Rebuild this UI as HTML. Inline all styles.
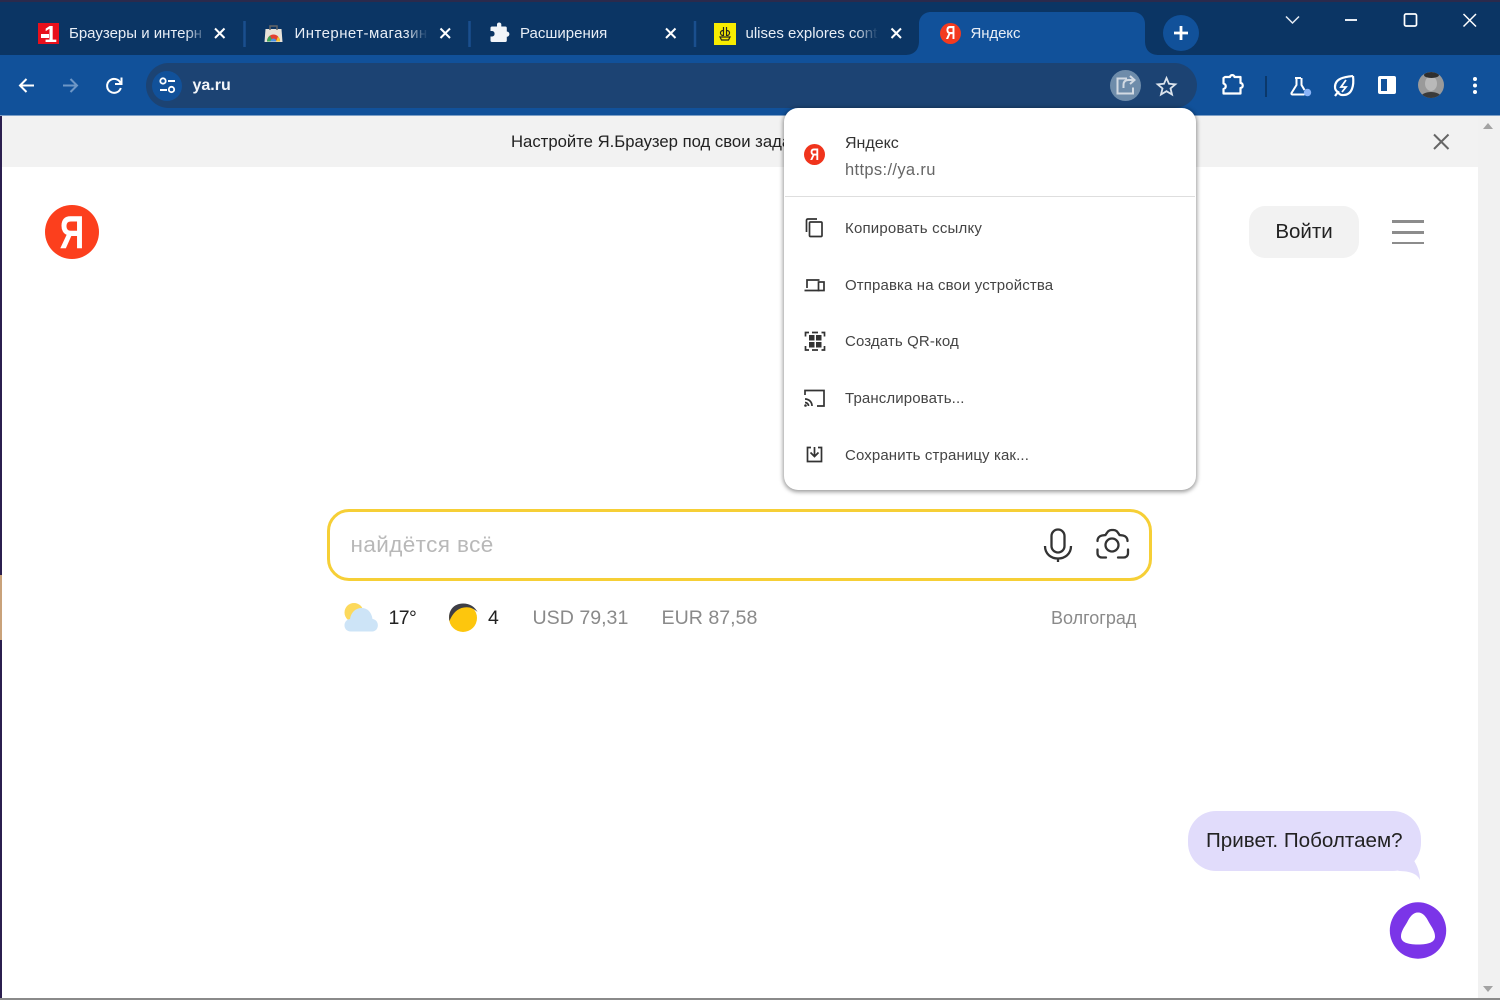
<!DOCTYPE html>
<html lang="ru"><head><meta charset="utf-8"><title>Яндекс</title>
<style>
html,body{margin:0;padding:0;width:1500px;height:1000px;overflow:hidden;background:#fff}
body{position:relative;font-family:"Liberation Sans","Noto Sans CJK SC",sans-serif}
.a{position:absolute}
.t{position:absolute;white-space:nowrap;line-height:20px}
svg{position:absolute;overflow:visible}
.tab{color:#e8eef6;font-size:15px;top:24px}
.fade{position:absolute;top:20px;height:26px;width:26px;background:linear-gradient(90deg,rgba(11,53,100,0),#0b3564 85%)}
.m{color:#444;font-size:15px;left:845px;letter-spacing:.12px}
.ws{fill:none;stroke:#fff;stroke-width:2}
.ic{fill:none;stroke:#333;stroke-width:1.7}
.ya{position:absolute;text-align:center;color:#fff;font-weight:bold;transform:scaleX(.74)}
</style></head><body>
<div class="a" style="left:0;top:0;width:1500px;height:1000px;background:#fff"></div>
<!-- tab strip -->
<div class="a" style="left:0;top:0;width:1500px;height:55px;background:#0b3564"></div>
<div class="a" style="left:0;top:0;width:1500px;height:2px;background:#2b2a4c"></div>
<div class="a" style="left:0;top:55px;width:1500px;height:61px;background:#11519a"></div>
<div class="a" style="left:0;top:115px;width:1500px;height:1px;background:#7d9fc6"></div>
<!-- tab 1 -->
<div class="a" style="left:38px;top:23px;width:21px;height:21px;background:#e8101c"></div>
<div class="t" style="left:40px;top:24px;width:21px;text-align:center;color:#fff;font-weight:bold;font-size:23px;line-height:20px">1</div>
<div class="a" style="left:41px;top:34px;width:8px;height:4px;background:#fff"></div>
<div class="t tab" style="left:69px">Браузеры и интерн</div>
<div class="fade" style="left:186px"></div>
<svg style="left:0;top:0" width="1" height="1"><path class="ws" d="M215 28.500l9.500 9.500M224.500 28.500l-9.500 9.500"/><path class="ws" d="M440.500 28.500l9.500 9.500M450 28.500l-9.500 9.500"/><path class="ws" d="M666 28.500l9.500 9.500M675.500 28.500l-9.500 9.500"/><path class="ws" d="M891.500 28.500l9.500 9.500M901 28.500l-9.500 9.500"/><path class="ws" d="M1117 28.500l9.500 9.500M1126.500 28.500l-9.500 9.500"/>
<path d="M244.500 21v26M469.500 21v26M695 21v26" stroke="#1a4f8e" stroke-width="2.500"/></svg>
<!-- tab 2 -->
<svg style="left:264px;top:24px" width="20" height="20"><path d="M1.500 5h16l1 13h-18z" fill="#e8e3da"/><path d="M6 6V2h7v4" fill="none" stroke="#666" stroke-width="1.500"/><path d="M3 17.500a6.500 7 0 0 1 13 0z" fill="#e34133"/><path d="M3 17.500a6.500 7 0 0 1 3-5.800l3 5.800z" fill="#3aa757"/><path d="M12.500 17.500a3 3 0 0 0-6 0z" fill="#4a90e2"/><path d="M16 17.500a6.500 7 0 0 0-2-5L12 17.500z" fill="#f7c52d"/></svg>
<div class="t tab" style="left:294.500px;letter-spacing:.45px">Интернет-магазин</div>
<div class="fade" style="left:406px"></div>
<!-- tab 3 -->
<svg style="left:489px;top:23px" width="20" height="20"><path d="M8 1.500a2.300 2.300 0 0 1 4.300 0V4h4a1.500 1.500 0 0 1 1.500 1.500v3.500a2.600 2.600 0 0 1 0 5.200V18a1.500 1.500 0 0 1-1.500 1.500H3A1.500 1.500 0 0 1 1.500 18v-4h1.800a2.800 2.800 0 0 0 0-5.500H1.500V5.500A1.500 1.500 0 0 1 3 4h5z" fill="#f2f5f9" transform="translate(0 -.5)"/></svg>
<div class="t tab" style="left:520px">Расширения</div>
<!-- tab 4 -->
<div class="a" style="left:714px;top:22.500px;width:22px;height:22px;background:#f8ec00"></div>
<svg style="left:714px;top:22px" width="22" height="22"><path d="M9.500 5v9M12.500 5v9M9 8.500a2.300 2.300 0 1 0 0 5M13 8.500a2.300 2.300 0 1 1 0 5M6 15h10l-1.500 3h-7z" stroke="#222" stroke-width="1.200" fill="none"/></svg>
<div class="t tab" style="left:745.500px">ulises explores cont</div>
<div class="fade" style="left:856px"></div>
<!-- active tab -->
<svg style="left:905px;top:10px" width="260" height="46"><path d="M0 45c8 0 14-4 14-14V14C14 7 19 2 26 2h202c7 0 12 5 12 12v17c0 10 6 14 14 14z" fill="#11519a"/></svg>
<div class="a" style="left:940px;top:23px;width:21px;height:21px;border-radius:50%;background:#f33a1f"></div>
<div class="ya" style="left:940px;top:23px;width:21px;font-size:18px;line-height:21px">Я</div>
<div class="t tab" style="left:970.500px;letter-spacing:-.1px">Яндекс</div>
<!-- new tab -->
<div class="a" style="left:1163px;top:15px;width:36px;height:36px;border-radius:50%;background:#11519a"></div>
<svg style="left:1163px;top:15px" width="36" height="36"><path d="M18 11v14M11 18h14" stroke="#fff" stroke-width="2.800"/></svg>
<!-- window controls -->
<svg style="left:0;top:0" width="1" height="1"><path d="M1286 16.500l6.500 6.500 6.500-6.500" fill="none" stroke="#e6ecf4" stroke-width="1.500"/><path d="M1345 20h12" stroke="#e6ecf4" stroke-width="2"/><rect x="1404.500" y="14" width="12" height="12" rx="1.500" fill="none" stroke="#fff" stroke-width="1.700"/><path d="M1463.500 14l12.500 12.500M1476 14l-12.500 12.500" stroke="#fff" stroke-width="1.500" fill="none"/></svg>
<!-- toolbar -->
<svg style="left:0;top:0" width="1" height="1"><path d="M34 85.500H20M26.500 79l-6.500 6.500 6.500 6.500" class="ws"/><path d="M63 85.500h14M70.500 79l6.500 6.500-6.500 6.500" fill="none" stroke="#6e97c6" stroke-width="2"/><path d="M120.500 83a7 7 0 1 0 .3 5" class="ws"/><path d="M121.500 77.500v6.500H115" fill="none" stroke="#fff" stroke-width="2"/></svg>
<div class="a" style="left:146px;top:63px;width:1051px;height:45px;border-radius:23px;background:#1c4373"></div>
<div class="a" style="left:152px;top:70.500px;width:30px;height:30px;border-radius:50%;background:#11519a"></div>
<svg style="left:0;top:0" width="1" height="1"><circle cx="163" cy="81" r="2.700" fill="none" stroke="#fff" stroke-width="1.800"/><path d="M168 81h7M160 90h7" stroke="#fff" stroke-width="2"/><circle cx="171.500" cy="89.500" r="2.700" fill="none" stroke="#fff" stroke-width="1.800"/></svg>
<div class="t" style="left:192.500px;top:76px;color:#f2f5f9;font-size:16px;font-weight:bold">ya.ru</div>
<div class="a" style="left:1110px;top:70px;width:31px;height:31px;border-radius:50%;background:#6e8caa"></div>
<svg style="left:0;top:0" width="1" height="1"><path d="M1127 78.500h-9.500v15h15.500v-6" fill="none" stroke="#d2dae3" stroke-width="2"/><path d="M1123.500 88v-3q0-5 5-5h6M1130 76l4.500 4-4.500 4" fill="none" stroke="#d2dae3" stroke-width="2"/>
<path d="M1166.500 78l2.500 5.800 6.300.5-4.800 4.100 1.500 6.100-5.500-3.300-5.500 3.300 1.500-6.100-4.800-4.100 6.300-.5z" fill="none" stroke="#dbe3ec" stroke-width="1.800"/>
<path d="M1225 77h5c0-2.500 4.500-2.500 4.500 0h6v6c3 0 3 5 0 5v5.500h-17V89c3-1 3-4.500 0-5.500V78z" fill="none" stroke="#fff" stroke-width="2.200" stroke-linejoin="round"/>
<path d="M1266 76v21" stroke="#0b3564" stroke-width="1.800"/>
<path d="M1295 78h6M1296.500 78v7l-5 8a1 1 0 0 0 1 1.500h12" fill="none" stroke="#fff" stroke-width="2"/><path d="M1301.500 78v7l3 5" fill="none" stroke="#fff" stroke-width="2"/><circle cx="1307.500" cy="92.500" r="3.700" fill="#8ab4f8"/>
<path d="M1353 76c-8 1-18 2-18 11 0 2 1 4 3 5l-3 4M1353 76c1 8 0 20-11 19-2 0-3-1-4-3" fill="none" stroke="#fff" stroke-width="2.200"/><path d="M1346 80l-5 7h5l-4 5" fill="none" stroke="#fff" stroke-width="1.800"/>
<rect x="1378" y="76" width="18" height="18" rx="2" fill="#fff"/><rect x="1381" y="79" width="6" height="12" fill="#11519a"/>
<circle cx="1475" cy="79" r="2" fill="#fff"/><circle cx="1475" cy="85.500" r="2" fill="#fff"/><circle cx="1475" cy="92" r="2" fill="#fff"/></svg>
<div class="a" style="left:1418px;top:72px;width:26px;height:26px;border-radius:50%;background:#9a9a9a;overflow:hidden"><div class="a" style="left:7px;top:4px;width:12px;height:15px;border-radius:50%;background:#b9b9b9"></div><div class="a" style="left:6px;top:0;width:15px;height:6px;border-radius:50%;background:#2f2f2f"></div><div class="a" style="left:3px;top:20px;width:20px;height:10px;border-radius:50%;background:#3a3a3a"></div></div>
<!-- page -->
<div class="a" style="left:0;top:116px;width:2px;height:884px;background:#2b1f4f"></div>
<div class="a" style="left:0;top:575px;width:2px;height:65px;background:#c9a27a"></div>
<div class="a" style="left:2px;top:116px;width:1476px;height:51px;background:#f2f2f2"></div>
<div class="a" style="left:1478px;top:116px;width:22px;height:884px;background:#f1f1f1"></div>
<div class="a" style="left:0;top:998px;width:1500px;height:2px;background:#8a8a8a"></div>
<svg style="left:0;top:0" width="1" height="1"><path d="M1488 123l5 6h-10z" fill="#a3a3a3"/><path d="M1488 992l5-6h-10z" fill="#a3a3a3"/><path d="M1434 134.500l14.500 14.500M1448.500 134.500L1434 149" stroke="#666" stroke-width="2" fill="none"/></svg>
<div class="t" style="left:511px;top:132px;color:#222;font-size:16.700px">Настройте Я.Браузер под свои задачи</div>
<!-- logo -->
<div class="a" style="left:44.500px;top:205px;width:54px;height:54px;border-radius:50%;background:#fc3f1d"></div>
<div class="ya" style="left:44.500px;top:205px;width:54px;font-size:46px;line-height:54px">Я</div>
<!-- login -->
<div class="a" style="left:1249px;top:206px;width:110px;height:52px;border-radius:16px;background:#f2f2f2"></div>
<div class="t" style="left:1249px;top:222px;width:110px;text-align:center;color:#222;font-size:20.500px">Войти</div>
<div class="a" style="left:1392px;top:220px;width:32px;height:2.500px;background:#8c8c8c"></div>
<div class="a" style="left:1392px;top:231px;width:32px;height:2.500px;background:#8c8c8c"></div>
<div class="a" style="left:1392px;top:241.500px;width:32px;height:2.500px;background:#8c8c8c"></div>
<!-- search -->
<div class="a" style="left:327px;top:509px;width:825px;height:72px;box-sizing:border-box;border:3px solid #f6cf36;border-radius:22px;background:#fff"></div>
<div class="t" style="left:350.500px;top:535px;color:#b8b8b8;font-size:22.500px;letter-spacing:.4px">найдётся всё</div>
<svg style="left:0;top:0" width="1" height="1"><rect x="1051.500" y="529.500" width="13" height="23" rx="6.500" fill="none" stroke="#333" stroke-width="2.300"/><path d="M1045 546c0 8 6 12.500 13 12.500s13-4.500 13-12.500M1058 558v4" fill="none" stroke="#333" stroke-width="2.300"/>
<circle cx="1112" cy="545" r="6.500" fill="none" stroke="#333" stroke-width="2.300"/><path d="M1097.500 541c0-3 2-5 4.500-5.500l3.500-.5c2-3 3-5 6-5h2c3 0 4 2 6 5l3.500.5c2.500.5 4.500 2.500 4.500 5.500M1097.500 549.500v3.500c0 3 2 4.500 4.500 4.500h4M1118 557.500h5.500c2.500 0 4.500-1.500 4.500-4.500v-3.500" fill="none" stroke="#333" stroke-width="2.300" stroke-linecap="round"/>
<circle cx="354" cy="612.500" r="9.500" fill="#fcd95c"/><path d="M351 631.500c-8.500 0-8.500-11.500-1-12.500 1-7 6-11 11.500-11 6 0 10 4 11 11 7.500 1 7 12.500-.5 12.500z" fill="#cde4f7"/>
<circle cx="463" cy="618" r="14" fill="#fdc60d"/><path d="M449.500 621c-2-10 4-17.500 13.500-17.500 7 0 12 3.500 14.500 8.500-4-4-9-5.500-13.500-4.500-7 1-11.500 6-14.500 13.500z" fill="#3e3e45"/></svg>
<div class="t" style="left:388.500px;top:608px;color:#222;font-size:19.500px;letter-spacing:-.6px">17°</div>
<div class="t" style="left:488px;top:608px;color:#222;font-size:19.500px">4</div>
<div class="t" style="left:532.500px;top:608px;color:#8a8a8a;font-size:19.600px">USD 79,31</div>
<div class="t" style="left:661.500px;top:608px;color:#8a8a8a;font-size:19.600px">EUR 87,58</div>
<div class="t" style="left:1051px;top:608px;color:#8a8a8a;font-size:18px">Волгоград</div>
<!-- alice -->
<div class="a" style="left:1187.500px;top:811px;width:233px;height:60px;border-radius:28px;background:#e1dcfb"></div>
<svg style="left:0;top:0" width="1" height="1"><path d="M1398 871c10 0 19 2 22 9 0-7-3-15-7-21z" fill="#e1dcfb"/><circle cx="1418" cy="930.500" r="28.200" fill="#7b35e8"/><path d="M1418 912.500c5 0 8 4 11 10 3 5 6 9 6 14 0 5.500-6 8-17 8s-17-2.500-17-8c0-5 3-9 6-14 3-6 6-10 11-10z" fill="#fff"/></svg>
<div class="t" style="left:1206px;top:831px;color:#222;font-size:20.600px">Привет. Поболтаем?</div>
<!-- popup -->
<div class="a" style="left:784px;top:108px;width:412px;height:382px;border-radius:14px;background:#fff;box-shadow:0 1px 4px 1px rgba(0,0,0,.4)"></div>
<div class="a" style="left:785px;top:196px;width:410px;height:1px;background:#dedede"></div>
<div class="a" style="left:804px;top:144px;width:21px;height:21px;border-radius:50%;background:#f0341c"></div>
<div class="ya" style="left:804px;top:144px;width:21px;font-size:17px;line-height:21px">Я</div>
<div class="t m" style="top:133.500px;font-size:16px;color:#333;letter-spacing:0">Яндекс</div>
<div class="t m" style="top:159.500px;font-size:16.500px;color:#666;letter-spacing:.35px">https://ya.ru</div>
<div class="t m" style="top:219px;letter-spacing:.2px">Копировать ссылку</div>
<div class="t m" style="top:276px">Отправка на свои устройства</div>
<div class="t m" style="top:332px">Создать QR-код</div>
<div class="t m" style="top:389px">Транслировать...</div>
<div class="t m" style="top:446px">Сохранить страницу как...</div>
<svg style="left:0;top:0" width="1" height="1">
<rect x="809.500" y="222" width="12.500" height="14.500" rx="1" class="ic"/><path d="M806.500 232v-11.500c0-1 .5-1.500 1.500-1.500h9" class="ic"/>
<path d="M804.500 290.500h15M807 288v-8h12.500" class="ic"/><rect x="818.500" y="282" width="5.500" height="8.500" class="ic" fill="#fff"/>
<rect x="809" y="335" width="5.500" height="5.500" fill="#333"/><rect x="816" y="335" width="5.500" height="5.500" fill="#333"/><rect x="809" y="342" width="5.500" height="5.500" fill="#333"/><rect x="816" y="342" width="5.500" height="5.500" fill="#333"/><path d="M809 332.500h-3.500v4M821.500 332.500h3v4M805.500 346v4h3.500M824.500 346v4h-3M812 332.500h6M812 350h6" class="ic" stroke-width="1.300"/>
<path d="M805 395v-4.500h19V406h-7" class="ic"/><path d="M805 399c4 0 7 3 7 7M805 402.500c2 0 3.500 1.500 3.500 3.500" class="ic"/><circle cx="805.500" cy="405.500" r="1.300" fill="#333"/>
<path d="M811 447.500h-3.500v14h14v-14H818" class="ic"/><path d="M814.500 447v9.500M810.500 452.500l4 4 4-4" class="ic"/>
</svg>
</body></html>
